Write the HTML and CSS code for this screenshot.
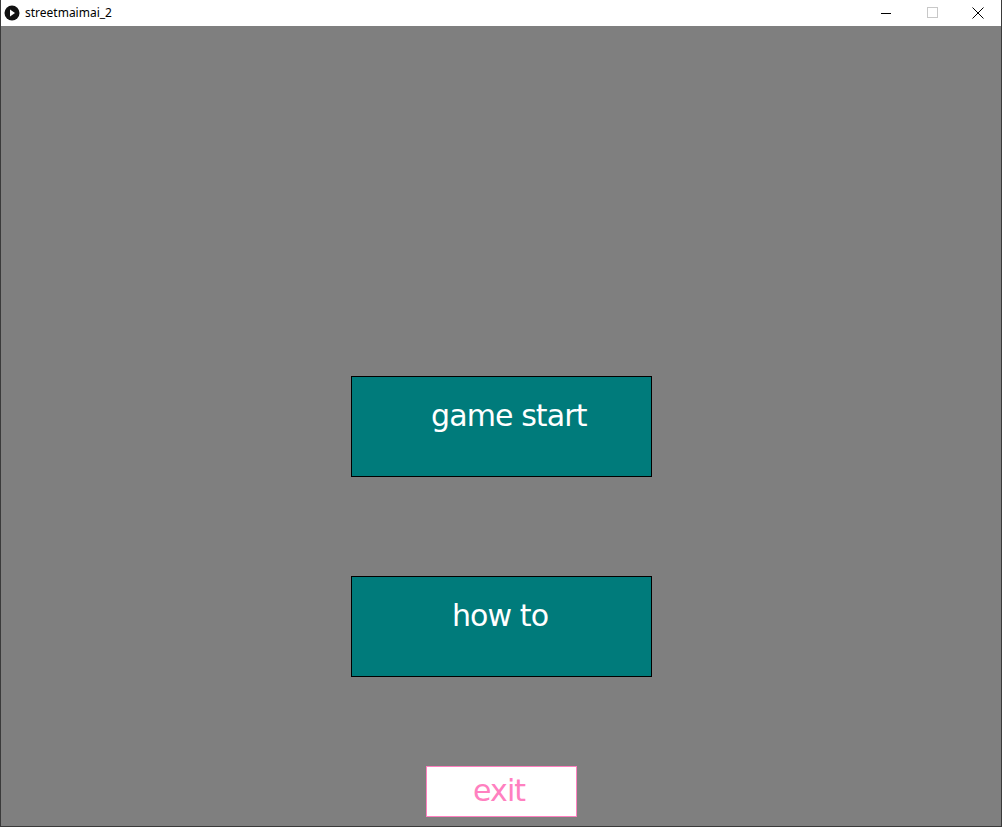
FILE: index.html
```html
<!DOCTYPE html>
<html>
<head>
<meta charset="utf-8">
<link rel="stylesheet" href="styles.css">
</head>
<body>
<div class="window">
  <div class="titlebar">
    <div class="title">
      <svg class="app-icon" width="16" height="16" viewBox="0 0 16 16"><circle cx="8" cy="8" r="7.5" fill="#111"/><path d="M6 4.5 L11 8 L6 11.5 Z" fill="#fff"/></svg>
      <span class="title-text">streetmaimai_2</span>
    </div>
    <div class="controls">
      <svg class="ctl" width="46" height="26" viewBox="0 0 46 26"><path d="M18 13.5 H28" stroke="#000" stroke-width="1"/></svg>
      <svg class="ctl" width="46" height="26" viewBox="0 0 46 26"><rect x="18.5" y="7.5" width="10" height="10" fill="none" stroke="#c8c8c8" stroke-width="1"/></svg>
      <svg class="ctl" width="46" height="26" viewBox="0 0 46 26"><path d="M17.5 7.5 L28.5 18.5 M28.5 7.5 L17.5 18.5" stroke="#000" stroke-width="1"/></svg>
    </div>
  </div>
  <div class="canvas">
    <div class="btn btn-start"><span>game start</span></div>
    <div class="btn btn-how"><span>how to</span></div>
    <div class="btn-exit"><span>exit</span></div>
  </div>
</div>
</body>
</html>
```

FILE: styles.css
```css
html, body {
  margin: 0;
  padding: 0;
  background: #ffffff;
}
.window {
  width: 1002px;
  height: 827px;
  box-sizing: border-box;
  border-left: 1px solid #3a3a3a;
  border-right: 1px solid #3a3a3a;
  border-bottom: 1px solid #3a3a3a;
  overflow: hidden;
  display: flex;
  flex-direction: column;
}
.titlebar {
  height: 26px;
  background: #ffffff;
  display: flex;
  justify-content: space-between;
  align-items: center;
  flex: none;
}
.title {
  display: flex;
  align-items: center;
  padding-left: 3px;
  gap: 5px;
}
.app-icon {
  display: block;
}
.title-text {
  font-family: "Noto Sans", "Open Sans", sans-serif;
  font-size: 12px;
  color: #000;
  line-height: 16px;
}
.controls {
  display: flex;
  height: 26px;
}
.ctl {
  display: block;
}
.canvas {
  flex: 1;
  background: #7f7f7f;
  padding-top: 350px;
  font-family: "DejaVu Sans", "Liberation Sans", sans-serif;
  font-size: 30px;
  line-height: 30px;
  letter-spacing: -0.9px;
}
.btn {
  width: 301px;
  height: 101px;
  box-sizing: border-box;
  border: 1px solid #000;
  background: #007b7b;
  color: #ffffff;
  margin-left: 350px;
}
.btn span {
  display: block;
}
.btn-start {
  padding: 24px 0 0 79px;
}
.btn-how {
  margin-top: 99px;
  padding: 24px 0 0 100px;
}
.btn-exit {
  width: 151px;
  height: 51px;
  box-sizing: border-box;
  border: 1px solid #ff80c0;
  background: #ffffff;
  color: #ff80c0;
  margin-left: 425px;
  margin-top: 89px;
  padding: 9px 0 0 46px;
}
.btn-exit span {
  display: block;
}
```
